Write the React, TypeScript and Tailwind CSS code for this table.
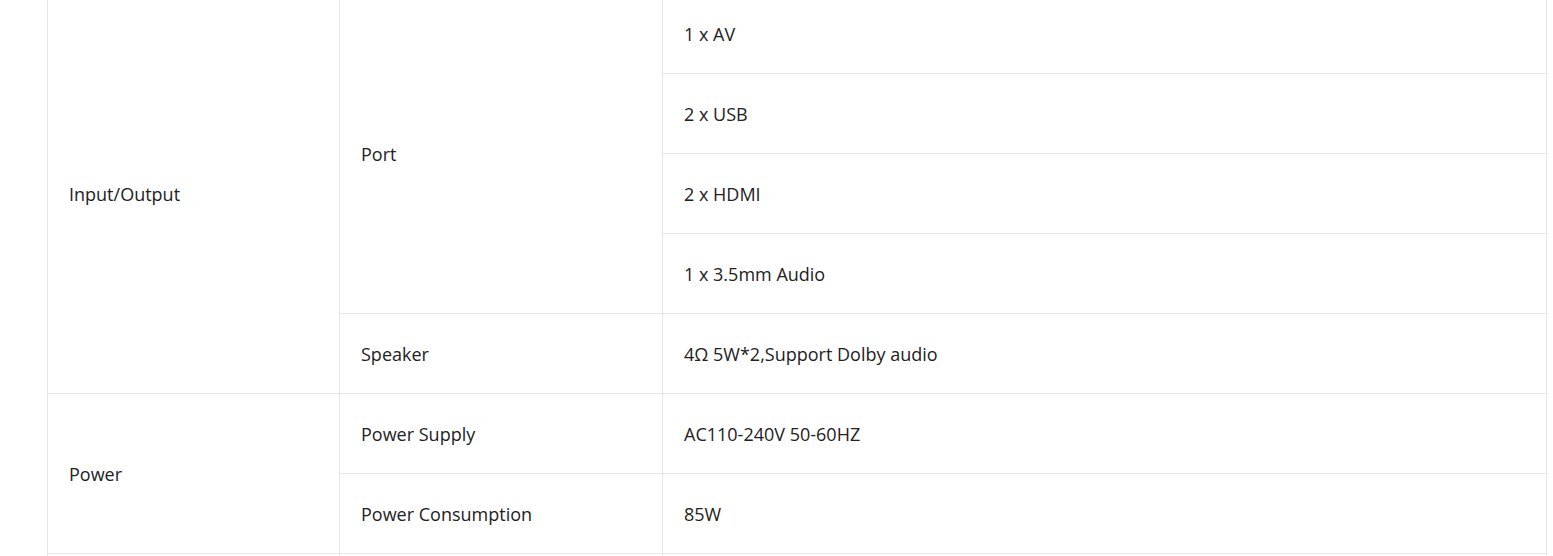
import React from "react";

const cell = "border border-[#e6e6e6] px-[21px] pt-[2px] pb-0 h-[80px] align-middle text-[18px] text-[#222] font-normal";

export default function App() {
  return (
    <div className="bg-white w-full h-[556px] overflow-hidden" style={{ fontFamily: '"Open Sans", sans-serif' }}>
      <div className="pl-[47px] -mt-[7px]">
        <table className="border-collapse w-[1500px] table-fixed">
          <colgroup>
            <col className="w-[292px]" />
            <col className="w-[323px]" />
            <col />
          </colgroup>
          <tbody>
            <tr>
              <td className={cell} rowSpan={5}>Input/Output</td>
              <td className={cell} rowSpan={4}>Port</td>
              <td className={cell}>1 x AV</td>
            </tr>
            <tr>
              <td className={cell}>2 x USB</td>
            </tr>
            <tr>
              <td className={cell}>2 x HDMI</td>
            </tr>
            <tr>
              <td className={cell}>1 x 3.5mm Audio</td>
            </tr>
            <tr>
              <td className={cell}>Speaker</td>
              <td className={cell}>4Ω 5W*2,Support Dolby audio</td>
            </tr>
            <tr>
              <td className={cell} rowSpan={2}>Power</td>
              <td className={cell}>Power Supply</td>
              <td className={cell}>AC110-240V 50-60HZ</td>
            </tr>
            <tr>
              <td className={cell}>Power Consumption</td>
              <td className={cell}>85W</td>
            </tr>
            <tr>
              <td className={cell}></td>
              <td className={cell}></td>
              <td className={cell}></td>
            </tr>
          </tbody>
        </table>
      </div>
    </div>
  );
}
